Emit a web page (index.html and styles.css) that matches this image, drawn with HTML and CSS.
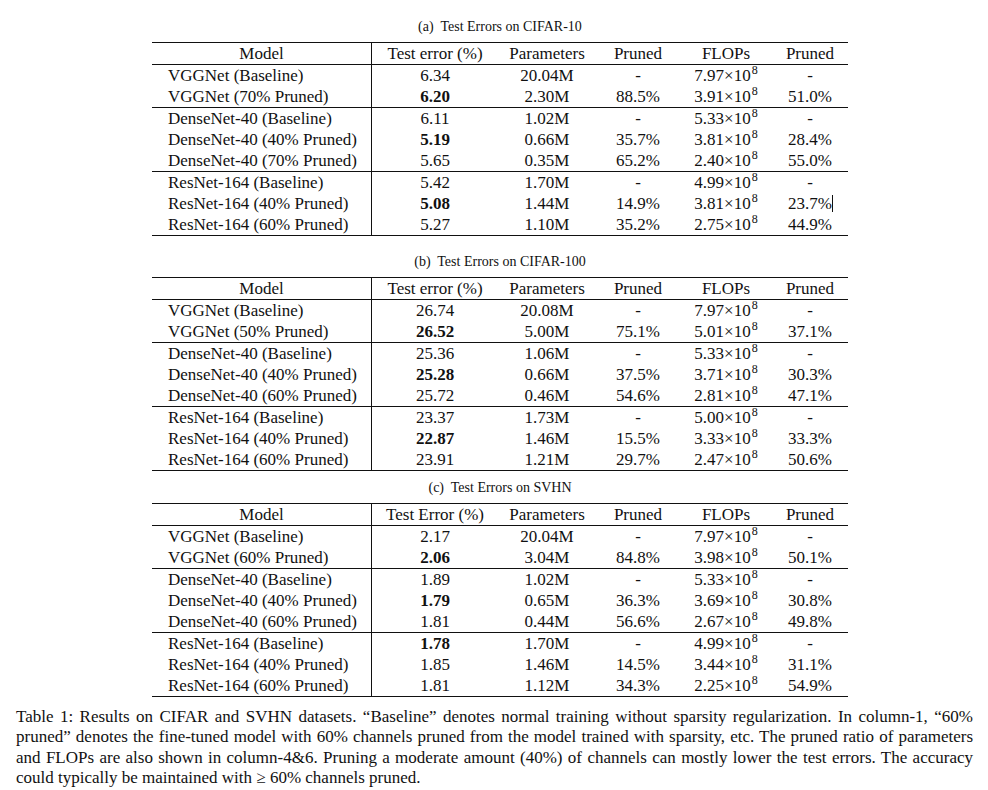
FILE: index.html
```html
<!DOCTYPE html>
<html>
<head>
<meta charset="utf-8">
<link rel="stylesheet" href="styles.css">
</head>
<body>
<div class="page">
  <section class="sub sub-a">
    <div class="subcap">(a)&nbsp; Test Errors on CIFAR-10</div>
    <table class="res">
      <colgroup><col class="c1"><col class="c2"><col class="c3"><col class="c4"><col class="c5"><col class="c6"></colgroup>
      <thead><tr><th class="model">Model</th><th>Test error (%)</th><th>Parameters</th><th>Pruned</th><th>FLOPs</th><th>Pruned</th></tr></thead>
      <tbody>
        <tr><td class="model">VGGNet (Baseline)</td><td>6.34</td><td>20.04M</td><td>-</td><td>7.97×10<sup>8</sup></td><td>-</td></tr>
        <tr><td class="model">VGGNet (70% Pruned)</td><td><b>6.20</b></td><td>2.30M</td><td>88.5%</td><td>3.91×10<sup>8</sup></td><td>51.0%</td></tr>
      </tbody>
      <tbody>
        <tr><td class="model">DenseNet-40 (Baseline)</td><td>6.11</td><td>1.02M</td><td>-</td><td>5.33×10<sup>8</sup></td><td>-</td></tr>
        <tr><td class="model">DenseNet-40 (40% Pruned)</td><td><b>5.19</b></td><td>0.66M</td><td>35.7%</td><td>3.81×10<sup>8</sup></td><td>28.4%</td></tr>
        <tr><td class="model">DenseNet-40 (70% Pruned)</td><td>5.65</td><td>0.35M</td><td>65.2%</td><td>2.40×10<sup>8</sup></td><td>55.0%</td></tr>
      </tbody>
      <tbody>
        <tr><td class="model">ResNet-164 (Baseline)</td><td>5.42</td><td>1.70M</td><td>-</td><td>4.99×10<sup>8</sup></td><td>-</td></tr>
        <tr><td class="model">ResNet-164 (40% Pruned)</td><td><b>5.08</b></td><td>1.44M</td><td>14.9%</td><td>3.81×10<sup>8</sup></td><td>23.7%<span class="caret"></span></td></tr>
        <tr><td class="model">ResNet-164 (60% Pruned)</td><td>5.27</td><td>1.10M</td><td>35.2%</td><td>2.75×10<sup>8</sup></td><td>44.9%</td></tr>
      </tbody>
    </table>
  </section>

  <section class="sub sub-b">
    <div class="subcap">(b)&nbsp; Test Errors on CIFAR-100</div>
    <table class="res">
      <colgroup><col class="c1"><col class="c2"><col class="c3"><col class="c4"><col class="c5"><col class="c6"></colgroup>
      <thead><tr><th class="model">Model</th><th>Test error (%)</th><th>Parameters</th><th>Pruned</th><th>FLOPs</th><th>Pruned</th></tr></thead>
      <tbody>
        <tr><td class="model">VGGNet (Baseline)</td><td>26.74</td><td>20.08M</td><td>-</td><td>7.97×10<sup>8</sup></td><td>-</td></tr>
        <tr><td class="model">VGGNet (50% Pruned)</td><td><b>26.52</b></td><td>5.00M</td><td>75.1%</td><td>5.01×10<sup>8</sup></td><td>37.1%</td></tr>
      </tbody>
      <tbody>
        <tr><td class="model">DenseNet-40 (Baseline)</td><td>25.36</td><td>1.06M</td><td>-</td><td>5.33×10<sup>8</sup></td><td>-</td></tr>
        <tr><td class="model">DenseNet-40 (40% Pruned)</td><td><b>25.28</b></td><td>0.66M</td><td>37.5%</td><td>3.71×10<sup>8</sup></td><td>30.3%</td></tr>
        <tr><td class="model">DenseNet-40 (60% Pruned)</td><td>25.72</td><td>0.46M</td><td>54.6%</td><td>2.81×10<sup>8</sup></td><td>47.1%</td></tr>
      </tbody>
      <tbody>
        <tr><td class="model">ResNet-164 (Baseline)</td><td>23.37</td><td>1.73M</td><td>-</td><td>5.00×10<sup>8</sup></td><td>-</td></tr>
        <tr><td class="model">ResNet-164 (40% Pruned)</td><td><b>22.87</b></td><td>1.46M</td><td>15.5%</td><td>3.33×10<sup>8</sup></td><td>33.3%</td></tr>
        <tr><td class="model">ResNet-164 (60% Pruned)</td><td>23.91</td><td>1.21M</td><td>29.7%</td><td>2.47×10<sup>8</sup></td><td>50.6%</td></tr>
      </tbody>
    </table>
  </section>

  <section class="sub sub-c">
    <div class="subcap">(c)&nbsp; Test Errors on SVHN</div>
    <table class="res">
      <colgroup><col class="c1"><col class="c2"><col class="c3"><col class="c4"><col class="c5"><col class="c6"></colgroup>
      <thead><tr><th class="model">Model</th><th>Test Error (%)</th><th>Parameters</th><th>Pruned</th><th>FLOPs</th><th>Pruned</th></tr></thead>
      <tbody>
        <tr><td class="model">VGGNet (Baseline)</td><td>2.17</td><td>20.04M</td><td>-</td><td>7.97×10<sup>8</sup></td><td>-</td></tr>
        <tr><td class="model">VGGNet (60% Pruned)</td><td><b>2.06</b></td><td>3.04M</td><td>84.8%</td><td>3.98×10<sup>8</sup></td><td>50.1%</td></tr>
      </tbody>
      <tbody>
        <tr><td class="model">DenseNet-40 (Baseline)</td><td>1.89</td><td>1.02M</td><td>-</td><td>5.33×10<sup>8</sup></td><td>-</td></tr>
        <tr><td class="model">DenseNet-40 (40% Pruned)</td><td><b>1.79</b></td><td>0.65M</td><td>36.3%</td><td>3.69×10<sup>8</sup></td><td>30.8%</td></tr>
        <tr><td class="model">DenseNet-40 (60% Pruned)</td><td>1.81</td><td>0.44M</td><td>56.6%</td><td>2.67×10<sup>8</sup></td><td>49.8%</td></tr>
      </tbody>
      <tbody>
        <tr><td class="model">ResNet-164 (Baseline)</td><td><b>1.78</b></td><td>1.70M</td><td>-</td><td>4.99×10<sup>8</sup></td><td>-</td></tr>
        <tr><td class="model">ResNet-164 (40% Pruned)</td><td>1.85</td><td>1.46M</td><td>14.5%</td><td>3.44×10<sup>8</sup></td><td>31.1%</td></tr>
        <tr><td class="model">ResNet-164 (60% Pruned)</td><td>1.81</td><td>1.12M</td><td>34.3%</td><td>2.25×10<sup>8</sup></td><td>54.9%</td></tr>
      </tbody>
    </table>
  </section>

  <p class="caption">Table 1: Results on CIFAR and SVHN datasets. “Baseline” denotes normal training without sparsity regularization. In column-1, “60% pruned” denotes the fine-tuned model with 60% channels pruned from the model trained with sparsity, etc. The pruned ratio of parameters and FLOPs are also shown in column-4&amp;6. Pruning a moderate amount (40%) of channels can mostly lower the test errors. The accuracy could typically be maintained with ≥ 60% channels pruned.</p>
</div>
</body>
</html>
```

FILE: styles.css
```css
html, body {
  margin: 0;
  padding: 0;
  background: #ffffff;
}
body {
  font-family: "Liberation Serif", "Times New Roman", serif;
  color: #111111;
}
.page {
  width: 988px;
  padding: 19px 15px 0 16px;
  box-sizing: border-box;
  display: flex;
  flex-direction: column;
}
.sub {
  display: flex;
  flex-direction: column;
  align-items: center;
  margin-left: 136px;
  width: 696px;
}
.sub-b { margin-top: 18px; }
.sub-c { margin-top: 9px; }
.subcap {
  font-size: 14px;
  line-height: 16px;
  height: 16px;
  margin-bottom: 7px;
  white-space: pre;
}
.res {
  width: 696px;
  table-layout: fixed;
  border-collapse: separate;
  border-spacing: 0;
  border-top: 1px solid #111;
  border-bottom: 1px solid #111;
  font-size: 17px;
}
.c1 { width: 220px; }
.c2 { width: 126px; }
.c3 { width: 98px; }
.c4 { width: 84px; }
.c5 { width: 92px; }
.c6 { width: 76px; }
.res th, .res td {
  padding: 0;
  height: 21px;
  line-height: 21px;
  text-align: center;
  font-weight: normal;
  white-space: nowrap;
}
.res th {
  height: 20px;
  line-height: 20px;
  padding-top: 1px;
  border-bottom: 1px solid #111;
}
.res .model {
  border-right: 1px solid #111;
}
.res td.model {
  text-align: left;
  padding-left: 16px;
}
.res tbody + tbody tr:first-child td {
  border-top: 1px solid #111;
}
.res b {
  font-weight: bold;
}
.res sup {
  font-size: 12px;
  line-height: 0;
  vertical-align: 7px;
  margin-left: 1px;
}
.caret {
  display: inline-block;
  width: 1px;
  height: 17px;
  background: #111;
  vertical-align: -3px;
  margin-right: -1px;
}
.caption {
  margin: 10px 0 0 0;
  width: 957px;
  font-size: 17px;
  line-height: 20.3px;
  text-align: justify;
}
```
